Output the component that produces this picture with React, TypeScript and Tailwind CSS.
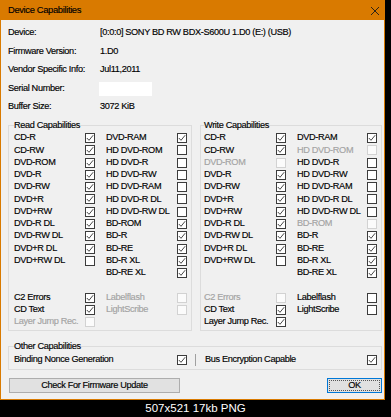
import type { ReactNode } from "react";

type S = "c" | "u" | "d" | "n";
type Item = [string, S];

const readLeft: Item[] = [
  ["CD-R", "c"], ["CD-RW", "c"], ["DVD-ROM", "c"], ["DVD-R", "c"], ["DVD-RW", "c"], ["DVD+R", "c"],
  ["DVD+RW", "c"], ["DVD-R DL", "c"], ["DVD-RW DL", "c"], ["DVD+R DL", "c"], ["DVD+RW DL", "u"], ["", "n"],
  ["", "n"], ["C2 Errors", "c"], ["CD Text", "c"], ["Layer Jump Rec.", "d"],
];
const readRight: Item[] = [
  ["DVD-RAM", "c"], ["HD DVD-ROM", "u"], ["HD DVD-R", "u"], ["HD DVD-RW", "u"], ["HD DVD-RAM", "u"], ["HD DVD-R DL", "u"],
  ["HD DVD-RW DL", "u"], ["BD-ROM", "c"], ["BD-R", "c"], ["BD-RE", "c"], ["BD-R XL", "c"], ["BD-RE XL", "c"],
  ["", "n"], ["Labelflash", "d"], ["LightScribe", "d"], ["", "n"],
];
const writeLeft: Item[] = [
  ["CD-R", "c"], ["CD-RW", "c"], ["DVD-ROM", "d"], ["DVD-R", "c"], ["DVD-RW", "c"], ["DVD+R", "c"],
  ["DVD+RW", "c"], ["DVD-R DL", "c"], ["DVD-RW DL", "c"], ["DVD+R DL", "c"], ["DVD+RW DL", "u"], ["", "n"],
  ["", "n"], ["C2 Errors", "d"], ["CD Text", "c"], ["Layer Jump Rec.", "c"],
];
const writeRight: Item[] = [
  ["DVD-RAM", "c"], ["HD DVD-ROM", "d"], ["HD DVD-R", "u"], ["HD DVD-RW", "u"], ["HD DVD-RAM", "u"], ["HD DVD-R DL", "u"],
  ["HD DVD-RW DL", "u"], ["BD-ROM", "d"], ["BD-R", "c"], ["BD-RE", "c"], ["BD-R XL", "c"], ["BD-RE XL", "c"],
  ["", "n"], ["Labelflash", "u"], ["LightScribe", "u"], ["", "n"],
];

function Box({ s }: { s: S }) {
  if (s === "n") return <span />;
  return (
    <span
      className={`w-[10px] h-[10px] border flex items-center justify-center ${
        s === "d" ? "border-[#d2d2d2] bg-[#fbfbfb]" : "border-[#3c3c3c] bg-white"
      }`}
    >
      {s === "c" && (
        <svg width="8" height="8" viewBox="0 0 8 8">
          <polyline points="0.8,4 3,6.3 7.2,1.2" fill="none" stroke="#333" strokeWidth="0.9" />
        </svg>
      )}
    </span>
  );
}

function Label({ text, s }: { text: string; s: S }) {
  return <span className={`whitespace-nowrap ${s === "d" ? "text-[#a3a3a3]" : "text-black"}`}>{text}</span>;
}

function Group({ title, left, right, cols, pad }: { title: string; left: Item[]; right: Item[]; cols: string; pad: string }) {
  const cells: ReactNode[] = [];
  left.forEach((l, i) => {
    const r = right[i];
    cells.push(<Label key={`a${i}`} text={l[0]} s={l[1]} />);
    cells.push(<Box key={`b${i}`} s={l[1]} />);
    cells.push(<span key={`g${i}`} />);
    cells.push(<Label key={`c${i}`} text={r[0]} s={r[1]} />);
    cells.push(<Box key={`d${i}`} s={r[1]} />);
  });
  return (
    <fieldset className={`border border-[#dcdcdc] pr-[4px] pt-[1px] pb-[2px] ${pad}`}>
      <legend className="leading-[12px] p-0">{title}</legend>
      <div className={`grid ${cols} auto-rows-[12.27px] items-center`}>{cells}</div>
    </fieldset>
  );
}

export default function App() {
  const info: [string, ReactNode][] = [
    ["Device:", "[0:0:0] SONY BD RW BDX-S600U 1.D0 (E:) (USB)"],
    ["Firmware Version:", "1.D0"],
    ["Vendor Specific Info:", "Jul11,2011"],
    ["Serial Number:", <span className="block w-[53px] h-[14px] bg-white -ml-[1px]" />],
    ["Buffer Size:", "3072 KiB"],
  ];

  return (
    <div className="w-[391px] h-[417px] bg-black font-['Liberation_Sans',Arial,sans-serif] text-[9.2px] tracking-[-0.35px] text-black [-webkit-text-stroke:0.15px]">
      <div className="w-[385px] h-[400px] bg-[#d97a00] flex flex-col">
        <div className="h-[20px] flex items-center justify-between pl-[8px] pr-[3px] text-[9.4px]">
          <span className="pt-[1px]">Device Capabilities</span>
          <svg width="10" height="10" viewBox="0 0 10 10" className="mr-[2px] mt-[2px]">
            <path d="M1 1 L9 9 M9 1 L1 9" stroke="#1a1a1a" strokeWidth="0.9" />
          </svg>
        </div>
        <div className="flex-1 mx-[1px] mb-[1px] bg-[#f0f0f0] flex flex-col">
          <div className="pt-[4px] pl-[7px]">
            {info.map(([k, v]) => (
              <div key={k} className="h-[18.5px] flex items-center">
                <span className="w-[92px] whitespace-nowrap">{k}</span>
                <span className="whitespace-nowrap">{v}</span>
              </div>
            ))}
          </div>

          <div className="flex mt-[2.5px] ml-[7px] gap-[8px]">
            <Group
              title="Read Capabilities"
              left={readLeft}
              right={readRight}
              cols="grid-cols-[71px_10px_11px_71px_10px]"
              pad="pl-[5px]"
            />
            <Group
              title="Write Capabilities"
              left={writeLeft}
              right={writeRight}
              cols="grid-cols-[72px_10px_11px_70px_10px]"
              pad="pl-[3px]"
            />
          </div>

          <fieldset className="border border-[#dcdcdc] mt-[9px] ml-[7px] w-[374px] pl-[5px] pr-[4px] pt-[1px] pb-[4px]">
            <legend className="leading-[12px] p-0">Other Capabilities</legend>
            <div className="grid grid-cols-[163px_10px_8px_1px_9px_162px_10px] h-[12px] items-center">
              <span className="whitespace-nowrap">Binding Nonce Generation</span>
              <Box s="c" />
              <span />
              <span className="h-[12px] bg-[#a0a0a0]" />
              <span />
              <span className="whitespace-nowrap">Bus Encryption Capable</span>
              <Box s="c" />
            </div>
          </fieldset>

          <div className="flex justify-between mt-[8px] ml-[8px] mr-[2px]">
            <button className="w-[171px] h-[15px] bg-[#e1e1e1] border border-[#adadad] leading-[13px]">
              Check For Firmware Update
            </button>
            <button className="w-[55px] h-[15px] bg-[#e1e1e1] border border-[#0078d7] p-[1px]">
              <span className="block w-full h-full border border-dotted border-[#555] leading-[9px]">OK</span>
            </button>
          </div>
        </div>
      </div>
      <div className="h-[17px] flex items-center justify-center text-white text-[11.5px] tracking-normal [-webkit-text-stroke:0px]">
        507x521 17kb PNG
      </div>
    </div>
  );
}
